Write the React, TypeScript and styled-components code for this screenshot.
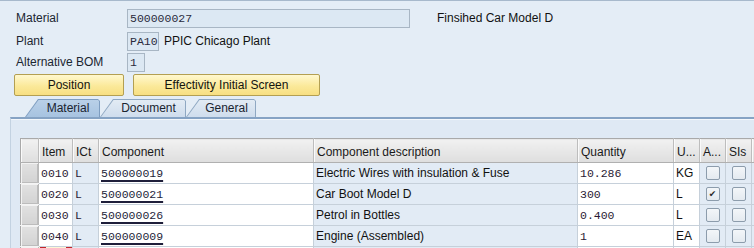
import { FC } from 'react';
import styled, { createGlobalStyle } from 'styled-components';

const SANS = '"Liberation Sans", "DejaVu Sans", sans-serif';
const MONO = '"Liberation Mono", "DejaVu Sans Mono", monospace';

type BomItem = {
  item: string;
  ict: string;
  component: string;
  description: string;
  quantity: string;
  unit: string;
  alt: boolean;
};

const items: BomItem[] = [
  { item: '0010', ict: 'L', component: '500000019', description: 'Electric Wires with insulation & Fuse', quantity: '10.286', unit: 'KG', alt: false },
  { item: '0020', ict: 'L', component: '500000021', description: 'Car Boot Model D', quantity: '300', unit: 'L', alt: true },
  { item: '0030', ict: 'L', component: '500000026', description: 'Petrol in Bottles', quantity: '0.400', unit: 'L', alt: false },
  { item: '0040', ict: 'L', component: '500000009', description: 'Engine (Assembled)', quantity: '1', unit: 'EA', alt: false },
];

const columns = [
  { name: '', width: 18 },
  { name: 'Item', width: 34 },
  { name: 'ICt', width: 26 },
  { name: 'Component', width: 215 },
  { name: 'Component description', width: 264 },
  { name: 'Quantity', width: 96 },
  { name: 'U...', width: 26 },
  { name: 'A...', width: 26 },
  { name: 'SIs', width: 26 },
  { name: '', width: 20 },
];

const App: FC = () => {
  return (
    <>
      <GlobalStyle />
      <Screen>
        <Header>
          <FieldRow $h={23}>
            <Label>Material</Label>
            <Field $w={283}>500000027</Field>
            <Desc $gap={27}>Finsihed Car Model D</Desc>
          </FieldRow>
          <FieldRow $h={21}>
            <Label>Plant</Label>
            <Field $w={32}>PA10</Field>
            <Desc $gap={5}>PPIC Chicago Plant</Desc>
          </FieldRow>
          <FieldRow $h={21}>
            <Label>Alternative BOM</Label>
            <Field $w={18}>1</Field>
          </FieldRow>
          <ButtonBar>
            <Button $w={110}>Position</Button>
            <Button $w={187}>Effectivity Initial Screen</Button>
          </ButtonBar>
        </Header>

        <TabStrip>
          <Tab $w={75} $active>
            <TabFace $active>Material</TabFace>
          </Tab>
          <Tab $w={86}>
            <TabFace>Document</TabFace>
          </Tab>
          <Tab $w={70}>
            <TabFace>General</TabFace>
          </Tab>
        </TabStrip>

        <Panel>
          <Grid>
            <colgroup>
              {columns.map((c, i) => (
                <col key={i} style={{ width: c.width }} />
              ))}
            </colgroup>
            <thead>
              <tr>
                {columns.map((c, i) => (
                  <Th key={i}>{c.name}</Th>
                ))}
              </tr>
            </thead>
            <tbody>
              {items.map((r) => (
                <tr key={r.item}>
                  <SelCell />
                  <Td $mono>{r.item}</Td>
                  <Td $mono $ro>{r.ict}</Td>
                  <Td $mono>
                    <CompLink>{r.component}</CompLink>
                  </Td>
                  <Td $ro>{r.description}</Td>
                  <Td $mono>{r.quantity}</Td>
                  <Td>{r.unit}</Td>
                  <Td $ro $center>
                    <Check $checked={r.alt}>{r.alt ? '✔' : ''}</Check>
                  </Td>
                  <Td $ro $center>
                    <Check />
                  </Td>
                  <Td $ro>
                    <CutMark />
                  </Td>
                </tr>
              ))}
              <tr>
                <SelCell />
                <Td $focus />
                <Td $ro />
                <Td />
                <Td $ro />
                <Td />
                <Td />
                <Td $ro />
                <Td $ro />
                <Td $ro />
              </tr>
            </tbody>
          </Grid>
        </Panel>
      </Screen>
    </>
  );
};

const GlobalStyle = createGlobalStyle`
  html, body {
    margin: 0;
    padding: 0;
    overflow: hidden;
    background: #e4edf6;
  }
  body {
    font-family: ${SANS};
    font-size: 12px;
    color: #1c1c1c;
  }
`;

const Screen = styled.div`
  width: 754px;
  height: 248px;
  overflow: hidden;
  box-sizing: border-box;
  border-top: 1px solid #a7b9cc;
  background: #e4edf6;
`;

const Header = styled.div`
  padding: 8px 0 0 16px;
`;

const FieldRow = styled.div<{ $h: number }>`
  display: flex;
  align-items: flex-start;
  height: ${({ $h }) => $h}px;
`;

const Label = styled.div`
  width: 111px;
  height: 19px;
  line-height: 19px;
  color: #1b2631;
  white-space: nowrap;
`;

const Field = styled.div<{ $w: number }>`
  box-sizing: border-box;
  width: ${({ $w }) => $w}px;
  height: 19px;
  padding: 0 2px;
  border: 1px solid #a8b6c4;
  background: #dce8f3;
  font-family: ${MONO};
  font-size: 11.5px;
  line-height: 17px;
  color: #2a2a3c;
  white-space: nowrap;
`;

const Desc = styled.div<{ $gap: number }>`
  margin-left: ${({ $gap }) => $gap}px;
  height: 19px;
  line-height: 19px;
  color: #111;
  white-space: nowrap;
`;

const ButtonBar = styled.div`
  display: flex;
  gap: 9px;
  margin-left: -2px;
`;

const Button = styled.div<{ $w: number }>`
  box-sizing: border-box;
  width: ${({ $w }) => $w}px;
  height: 22px;
  line-height: 20px;
  text-align: center;
  border: 1px solid #b39f52;
  border-radius: 2px;
  background: linear-gradient(#fff8cf, #fbe99a 55%, #f7df82);
  color: #14140f;
  white-space: nowrap;
`;

const TabStrip = styled.div`
  display: flex;
  align-items: flex-end;
  height: 18px;
  margin-top: 3px;
  padding-left: 25px;
`;

const Tab = styled.div<{ $w: number; $active?: boolean }>`
  box-sizing: border-box;
  width: ${({ $w }) => $w}px;
  height: 18px;
  padding: 1px 1px 0 1px;
  background: ${({ $active }) => ($active ? '#7e9dc0' : '#8fa8c2')};
  clip-path: polygon(13px 0, calc(100% - 2px) 0, 100% 2px, 100% 100%, 0 100%);
`;

const TabFace = styled.div<{ $active?: boolean }>`
  height: 17px;
  line-height: 17px;
  padding-left: 11px;
  text-align: center;
  background: ${({ $active }) =>
    $active ? 'linear-gradient(#b9d0e8, #a7c3e0)' : 'linear-gradient(#e2ebf4, #cfdded)'};
  color: #1a2430;
  clip-path: polygon(12.5px 0, calc(100% - 1px) 0, 100% 1px, 100% 100%, 0 100%);
  white-space: nowrap;
`;

const Panel = styled.div`
  margin-left: 10px;
  height: 200px;
  border-top: 2px solid #86a3c4;
  border-left: 1px solid #c3d2e1;
  box-shadow: inset 0 1px 0 #f3f7fb;
  background: #dfe9f4;
  padding: 19px 0 0 9px;
`;

const Grid = styled.table`
  border-collapse: collapse;
  table-layout: fixed;
  width: 751px;
  border-top: 1px solid #a9a9a9;
  border-left: 1px solid #a9a9a9;
`;

const Th = styled.th`
  height: 24px;
  padding: 2px 3px 0;
  box-sizing: border-box;
  text-align: left;
  font-weight: normal;
  font-size: 12px;
  color: #1a1a1a;
  background: linear-gradient(#f1f1f1, #dedede);
  border-right: 1px solid #bdbdbd;
  border-bottom: 1px solid #b0b0b0;
  box-shadow: inset 1px 0 0 #fafafa;
  white-space: nowrap;
  overflow: hidden;
`;

const SelCell = styled.td`
  height: 20px;
  padding: 0;
  background: linear-gradient(#e1e1e1, #d2d2d2);
  border-right: 1px solid #b9b9b9;
  border-bottom: 1px solid #f4f4f4;
  box-shadow: inset 1px 1px 0 #f2f2f2, inset -1px -1px 0 #bcbcbc;
`;

const Td = styled.td<{ $mono?: boolean; $ro?: boolean; $center?: boolean; $focus?: boolean }>`
  position: relative;
  height: 20px;
  padding: 0 2px;
  box-sizing: border-box;
  background: ${({ $ro, $focus }) => ($focus ? '#fdf6d6' : $ro ? '#e2ebf5' : '#ffffff')};
  border-right: 1px solid #c6d0da;
  border-bottom: 1px solid #c6d0da;
  font-family: ${({ $mono }) => ($mono ? MONO : SANS)};
  font-size: ${({ $mono }) => ($mono ? '11.5px' : '12px')};
  color: ${({ $mono }) => ($mono ? '#2a1a33' : '#111')};
  text-align: ${({ $center }) => ($center ? 'center' : 'left')};
  white-space: nowrap;
  overflow: hidden;
  ${({ $focus }) =>
    $focus &&
    `
    &::before, &::after {
      content: '';
      position: absolute;
      top: 0;
      width: 5px;
      height: 6px;
      border-top: 1px solid #c0262c;
    }
    &::before { left: 1px; border-left: 1px solid #c0262c; }
    &::after { right: 0; border-right: 1px solid #c0262c; }
  `}
`;

const CompLink = styled.span`
  text-decoration: underline;
  text-decoration-thickness: 2px;
  text-underline-offset: 3px;
  color: #1e1e3a;
`;

const Check = styled.span<{ $checked?: boolean }>`
  display: inline-block;
  box-sizing: border-box;
  width: 14px;
  height: 14px;
  vertical-align: middle;
  border: 1px solid #8c9cac;
  border-radius: 2px;
  background: linear-gradient(#f3f6f9, #e4eaf0);
  font-size: 9px;
  line-height: 12px;
  text-align: center;
  color: #2b2b2b;
`;

const CutMark = styled.span`
  display: inline-block;
  width: 2px;
  height: 3px;
  margin-left: 0;
  vertical-align: middle;
  background: #8a2140;
`;

export default App;
